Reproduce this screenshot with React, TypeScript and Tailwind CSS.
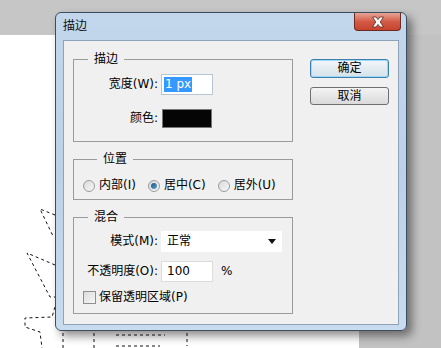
import React from "react";

const font = { fontFamily: '"DejaVu Sans", "Noto Sans CJK SC", sans-serif' };

function Radio({ checked, label }: { checked?: boolean; label: string }) {
  return (
    <label className="flex items-center gap-[4px]">
      <span className="grid h-[12px] w-[12px] place-items-center rounded-full border border-[#9a9c9e] bg-gradient-to-br from-[#d8d9da] to-[#f8f8f8]">
        {checked && <span className="h-[6px] w-[6px] rounded-full bg-gradient-to-br from-[#1d4f78] to-[#5ea9d8]" />}
      </span>
      <span>{label}</span>
    </label>
  );
}

function Legend({ title }: { title: string }) {
  return <legend className="ml-[14px] px-[6px] text-[12px] leading-[14px]">{title}</legend>;
}

function Field({ label, children }: { label: string; children: React.ReactNode }) {
  return (
    <div className="flex h-[21px] items-center gap-[3px]">
      <span className="w-[84px] whitespace-nowrap text-right">{label}</span>
      {children}
    </div>
  );
}

function DashedLines() {
  return (
    <svg className="absolute left-0 top-0" width="441" height="348" fill="none" stroke="#111" strokeWidth="1" strokeDasharray="3 3">
      <path d="M55 215 L40 209 L53 236" />
      <path d="M55 265 L27 253 L50 297 L55 297" />
      <path d="M55 307 L52 317 L25 318 L25 327 L40 332 L42 348" />
      <path d="M63 333 L63 348" />
      <path d="M94 333 L94 348" />
      <path d="M116 335 L165 335" />
      <path d="M116 346 L160 346" />
      <path d="M187 333 L187 346" />
    </svg>
  );
}

export default function App() {
  return (
    <div className="relative h-[348px] w-[441px] overflow-hidden bg-[#c2c2c2] text-[12px] leading-[15px] text-black" style={font}>
      <div className="flex h-full flex-col">
        <div className="h-[35px] bg-[#c6c6c6]" />
        <div className="flex flex-1">
          <div className="w-[359px] bg-white" />
        </div>
      </div>
      <DashedLines />

      <div className="absolute left-[55px] top-[12px] flex h-[319px] w-[352px] flex-col rounded-[6px] border border-[#3d4d5e] bg-gradient-to-b from-[#c2d6ec] via-[#bcd0e8] to-[#c9dbee] px-[7px] pb-[5px] shadow-[5px_5px_10px_rgba(0,0,0,0.45)]">
        <div className="flex h-[27px] items-center text-[12px] text-[#111]">描边</div>
        <button
          type="button"
          aria-label="Close"
          className="absolute right-[5px] top-0 grid h-[18px] w-[47px] place-items-center rounded-b-[4px] border border-t-0 border-[#6d2a20] bg-gradient-to-b from-[#e6a497] via-[#d25a47] to-[#c8432d]"
        >
          <svg width="14" height="12" viewBox="0 0 14 12">
            <path d="M1.5 1 L5 1 L7 3.6 L9 1 L12.5 1 L9.2 6 L12.5 11 L9 11 L7 8.4 L5 11 L1.5 11 L4.8 6 Z" fill="#fff" stroke="#5a2a24" strokeWidth="0.8" />
          </svg>
        </button>

        <div className="flex flex-1 gap-[17px] border border-[#8ea3ba] bg-[#f0f0f0] pl-[9px] pt-[11px]">
          <div className="flex w-[220px] flex-col gap-[10px]">
            <fieldset className="flex h-[90px] flex-col gap-[13px] border border-[#9b9b9b] pt-[8px]">
              <Legend title="描边" />
              <Field label="宽度(W):">
                <span className="flex h-[21px] w-[52px] items-center border border-[#b8c4d2] bg-white pl-[2px]">
                  <span className="bg-[#3399ff] px-[1px] leading-[15px] text-white">1 px</span>
                </span>
              </Field>
              <Field label="颜色:">
                <span className="ml-[1px] h-[19px] w-[50px] border border-[#777] bg-[#050505]" />
              </Field>
            </fieldset>

            <fieldset className="flex h-[48px] flex-col border border-[#9b9b9b] pl-[9px] pt-[12px]">
              <Legend title="位置" />
              <div className="flex items-center gap-[12px]">
                <Radio label="内部(I)" />
                <Radio checked label="居中(C)" />
                <Radio label="居外(U)" />
              </div>
            </fieldset>

            <fieldset className="flex h-[104px] flex-col gap-[9px] border border-[#9b9b9b] pt-[7px]">
              <Legend title="混合" />
              <Field label="模式(M):">
                <span className="flex h-[21px] w-[121px] items-center justify-between bg-white pl-[6px] pr-[6px]">
                  <span>正常</span>
                  <svg width="8" height="5" viewBox="0 0 8 5">
                    <path d="M0 0 L8 0 L4 5 Z" fill="#111" />
                  </svg>
                </span>
              </Field>
              <Field label="不透明度(O):">
                <span className="flex h-[21px] w-[52px] items-center border border-[#dcdcdc] bg-white pl-[5px]">100</span>
                <span className="ml-[5px]">%</span>
              </Field>
              <label className="-mt-[1px] flex items-center gap-[3px] pl-[9px]">
                <span className="h-[13px] w-[13px] border border-[#8f8f8f] bg-gradient-to-br from-[#dcdcdc] to-[#f6f6f6]" />
                <span>保留透明区域(P)</span>
              </label>
            </fieldset>
          </div>

          <div className="flex w-[79px] flex-col gap-[9px] pt-[7px]">
            <button
              type="button"
              className="h-[19px] rounded-[3px] border border-[#3c7fb1] bg-gradient-to-b from-[#f2f6f9] to-[#d5e2ea] text-[12px] leading-[17px] shadow-[inset_0_0_0_1px_#9fd8f1]"
            >
              确定
            </button>
            <button
              type="button"
              className="h-[18px] rounded-[3px] border border-[#707070] bg-gradient-to-b from-[#f4f4f4] to-[#dadada] text-[12px] leading-[16px]"
            >
              取消
            </button>
          </div>
        </div>
      </div>
    </div>
  );
}
